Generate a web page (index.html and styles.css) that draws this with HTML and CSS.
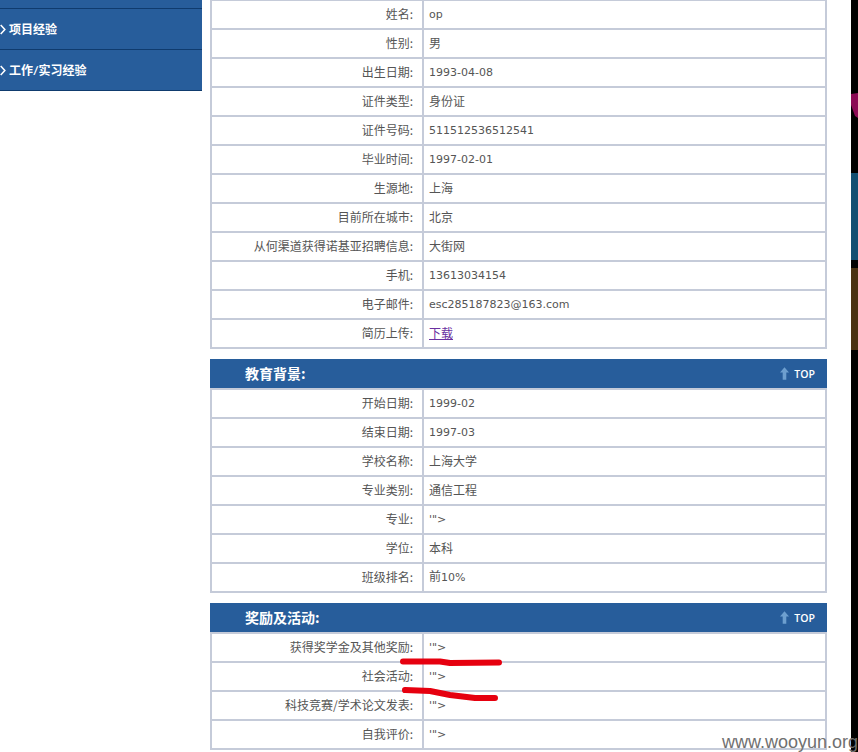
FILE: index.html
```html
<!DOCTYPE html>
<html lang="zh-CN">
<head>
<meta charset="utf-8">
<title>简历</title>
<link rel="stylesheet" href="styles.css">
</head>
<body>
<div class="page">
  <aside class="sidebar">
    <div class="side-stub"></div>
    <a class="side-item"><svg class="chev" viewBox="0 0 6 12"><path d="M0.5 1 L5 6 L0.5 11"/></svg>项目经验</a>
    <a class="side-item"><svg class="chev" viewBox="0 0 6 12"><path d="M0.5 1 L5 6 L0.5 11"/></svg>工作/实习经验</a>
  </aside>
  <main class="main">
    <table class="info">
      <tr><td class="k">姓名:</td><td class="v"><span class="n">op</span></td></tr>
      <tr><td class="k">性别:</td><td class="v">男</td></tr>
      <tr><td class="k">出生日期:</td><td class="v"><span class="n">1993-04-08</span></td></tr>
      <tr><td class="k">证件类型:</td><td class="v">身份证</td></tr>
      <tr><td class="k">证件号码:</td><td class="v"><span class="n">511512536512541</span></td></tr>
      <tr><td class="k">毕业时间:</td><td class="v"><span class="n">1997-02-01</span></td></tr>
      <tr><td class="k">生源地:</td><td class="v">上海</td></tr>
      <tr><td class="k">目前所在城市:</td><td class="v">北京</td></tr>
      <tr><td class="k">从何渠道获得诺基亚招聘信息:</td><td class="v">大街网</td></tr>
      <tr><td class="k">手机:</td><td class="v"><span class="n">13613034154</span></td></tr>
      <tr><td class="k">电子邮件:</td><td class="v"><span class="n">esc285187823@163.com</span></td></tr>
      <tr><td class="k">简历上传:</td><td class="v"><a class="dl" href="#">下载</a></td></tr>
    </table>
    <section class="block">
      <div class="head"><span class="title">教育背景:</span><span class="top"><svg class="arrow" viewBox="0 0 10 14"><path d="M5 0 L10 6 L7 6 L7 14 L3 14 L3 6 L0 6 Z"/></svg>TOP</span></div>
      <table class="info">
        <tr><td class="k">开始日期:</td><td class="v"><span class="n">1999-02</span></td></tr>
        <tr><td class="k">结束日期:</td><td class="v"><span class="n">1997-03</span></td></tr>
        <tr><td class="k">学校名称:</td><td class="v">上海大学</td></tr>
        <tr><td class="k">专业类别:</td><td class="v">通信工程</td></tr>
        <tr><td class="k">专业:</td><td class="v"><span class="n">'"&gt;</span></td></tr>
        <tr><td class="k">学位:</td><td class="v">本科</td></tr>
        <tr><td class="k">班级排名:</td><td class="v">前<span class="n">10%</span></td></tr>
      </table>
    </section>
    <section class="block">
      <div class="head"><span class="title">奖励及活动:</span><span class="top"><svg class="arrow" viewBox="0 0 10 14"><path d="M5 0 L10 6 L7 6 L7 14 L3 14 L3 6 L0 6 Z"/></svg>TOP</span></div>
      <table class="info">
        <tr><td class="k">获得奖学金及其他奖励:</td><td class="v"><span class="n">'"&gt;</span></td></tr>
        <tr><td class="k">社会活动:</td><td class="v"><span class="n">'"&gt;</span></td></tr>
        <tr><td class="k">科技竞赛/学术论文发表:</td><td class="v"><span class="n">'"&gt;</span></td></tr>
        <tr><td class="k">自我评价:</td><td class="v"><span class="n">'"&gt;</span></td></tr>
      </table>
    </section>
  </main>
</div>
<svg class="scribble" viewBox="0 0 858 752">
  <path d="M403 661.5 L440 661.5 L450 663 L499 662.5"/>
  <path d="M405 690 L430 691 L450 695 L475 698 L495 698"/>
</svg>
<div class="strip">
  <svg class="strip-art" viewBox="0 0 7 752" preserveAspectRatio="none">
    <path class="magenta" d="M0 94 L7 93 L7 118 L4 116 L0 105 Z"/>
    <rect class="teal" x="0" y="173" width="7" height="87"/>
    <rect class="brown" x="0" y="268" width="7" height="82"/>
  </svg>
</div>
<div class="mark">www.wooyun.org</div>
</body>
</html>
```
FILE: styles.css
```css
html, body {
  margin: 0;
  padding: 0;
  background: #fff;
  height: 752px;
  overflow: hidden;
}
body {
  font-family: "Noto Sans CJK SC", sans-serif;
  font-size: 12px;
  color: #555;
}
.page {
  display: flex;
  gap: 8px;
  align-items: flex-start;
  height: 752px;
  overflow: hidden;
}
.sidebar {
  width: 202px;
  flex: none;
  background: #275d9b;
  color: #fff;
  font-weight: 700;
}
.side-stub {
  height: 8px;
  border-bottom: 1px solid #0f3b6e;
}
.side-item {
  display: flex;
  align-items: center;
  gap: 3px;
  height: 39px;
  padding-bottom: 1px;
  border-bottom: 1px solid #0f3b6e;
  font-family: "Lato", "Noto Sans CJK SC", sans-serif;
}
.chev {
  width: 6px;
  height: 11px;
  flex: none;
  margin-top: 1px;
}
.chev path {
  fill: none;
  stroke: #fff;
  stroke-width: 1.7;
}
.main {
  width: 617px;
  flex: none;
  margin-top: -1px;
}
.info {
  width: 617px;
  box-sizing: border-box;
  table-layout: fixed;
  border-collapse: separate;
  border-spacing: 0;
  border-left: 2px solid #c5cbd9;
  border-top: 2px solid #c5cbd9;
}
.info td {
  box-sizing: border-box;
  height: 29px;
  padding: 0 0 1px;
  border-right: 2px solid #c5cbd9;
  border-bottom: 2px solid #c5cbd9;
  vertical-align: middle;
  line-height: 16px;
}
.k {
  width: 212px;
  text-align: right;
  padding-right: 9px !important;
}
.v {
  padding-left: 5px !important;
}
.n {
  font-family: "DejaVu Sans", sans-serif;
  font-size: 11px;
}
.dl {
  color: #6a2fa0;
  text-decoration: underline;
}
.block {
  margin-top: 10px;
}
.head {
  display: flex;
  justify-content: space-between;
  align-items: center;
  box-sizing: border-box;
  height: 29px;
  background: #275d9b;
  color: #fff;
  padding: 0 12px 1px 35px;
}
.title {
  font-size: 14px;
  font-weight: 700;
}
.top {
  display: flex;
  align-items: center;
  gap: 5px;
  font-family: "Open Sans", sans-serif;
  font-size: 10.5px;
  font-weight: 600;
  padding-top: 1px;
}
.arrow {
  width: 9px;
  height: 13px;
}
.arrow path {
  fill: #6d9fcf;
}
.scribble {
  position: absolute;
  left: 0;
  top: 0;
  width: 858px;
  height: 752px;
  pointer-events: none;
}
.scribble path {
  fill: none;
  stroke: #e6000f;
  stroke-width: 6;
  stroke-linecap: round;
  stroke-linejoin: round;
}
.strip {
  position: absolute;
  left: 851px;
  top: 0;
  width: 7px;
  height: 752px;
  background: #000;
}
.strip-art {
  display: block;
  width: 7px;
  height: 752px;
}
.magenta { fill: #8c0a55; }
.teal { fill: #124f72; }
.brown { fill: #4a3212; }
.mark {
  position: absolute;
  left: 722px;
  top: 732px;
  font-family: "Liberation Sans", sans-serif;
  font-size: 18px;
  line-height: 21px;
  color: #707070;
  white-space: nowrap;
}
```
